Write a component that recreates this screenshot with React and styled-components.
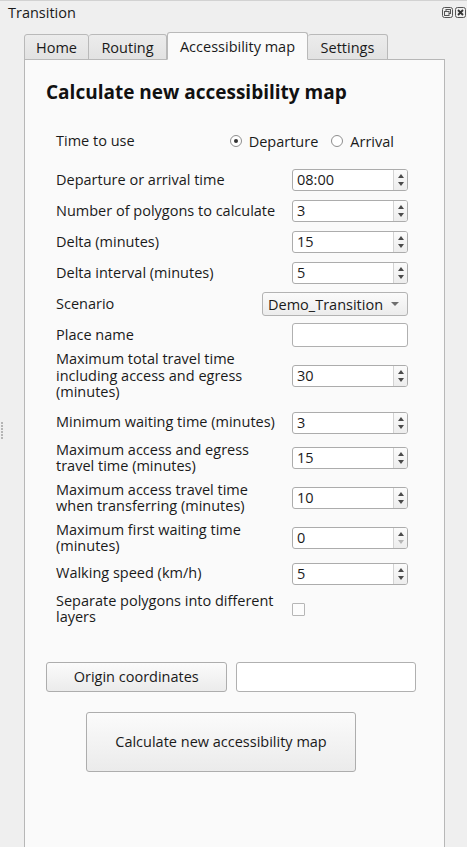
import React from "react";
import styled, { createGlobalStyle } from "styled-components";

const GlobalStyle = createGlobalStyle`
  html, body { margin: 0; padding: 0; background: #efefef; }
  body { font-family: "Open Sans", "DejaVu Sans", sans-serif; color: #1a1a1a; }
  * { box-sizing: border-box; }
`;

const Window = styled.div`
  width: 467px;
  height: 847px;
  overflow: hidden;
  background: #efefef;
  border-top: 1px solid #d2d2d2;
  display: flex;
  flex-direction: column;
  font-size: 14.5px;
`;

const TitleBar = styled.div`
  height: 23px;
  display: flex;
  align-items: center;
  justify-content: space-between;
  padding: 0 1px 0 8px;
`;

const Title = styled.span`
  font-size: 14.5px;
  line-height: 16px;
`;

const TitleIcons = styled.div`
  display: flex;
  gap: 2px;
  align-items: center;
`;

const Body = styled.div`
  flex: 1;
  display: flex;
  min-height: 0;
`;

const Handle = styled.div`
  width: 24px;
  display: flex;
  flex-direction: column;
  justify-content: center;
  align-items: flex-start;
  padding: 0 0 10px 1px;
  gap: 1px;
`;

const Dot = styled.span`
  width: 2px;
  height: 2px;
  background: #b5b5b5;
`;

const TabWidget = styled.div`
  width: 421px;
  display: flex;
  flex-direction: column;
  padding-top: 8px;
`;

const TabBar = styled.div`
  display: flex;
  align-items: flex-end;
  height: 28px;
  margin-bottom: -1px;
  position: relative;
  z-index: 1;
`;

const Tab = styled.div`
  width: ${(p) => p.$w}px;
  height: ${(p) => (p.$active ? 28 : 26)}px;
  display: flex;
  align-items: center;
  justify-content: center;
  font-size: 14.5px;
  border: 1px solid #b9b9b9;
  border-left-width: ${(p) => (p.$noLeft ? 0 : 1)}px;
  border-bottom: ${(p) => (p.$active ? "1px solid #fafafa" : "1px solid #b9b9b9")};
  border-radius: 3px 3px 0 0;
  background: ${(p) =>
    p.$active ? "#fafafa" : "linear-gradient(#ececec, #e2e2e2)"};
  padding-top: ${(p) => (p.$active ? 0 : 1)}px;
`;

const Panel = styled.div`
  flex: 1;
  background: #fafafa;
  border: 1px solid #b7b7b7;
  border-bottom: none;
  padding: 20px 28px 0 21px;
`;

const Heading = styled.h1`
  margin: 0;
  font-size: 19px;
  line-height: 24px;
  font-weight: 700;
  color: #111;
`;

const Form = styled.div`
  margin: 25px 8px 0 10px;
  display: grid;
  grid-template-columns: 1fr auto;
  row-gap: 7px;
  column-gap: 8px;
  align-items: center;
`;

const Label = styled.div`
  font-size: 14.5px;
  line-height: 16.5px;
  min-height: 24px;
  min-width: 0;
  white-space: nowrap;
  display: flex;
  align-items: center;
  margin-top: ${(p) => p.$mt || 0}px;
  margin-bottom: ${(p) => p.$mb || 0}px;
`;

const FieldCell = styled.div`
  justify-self: end;
  display: flex;
  align-items: center;
  margin-top: ${(p) => p.$mt || 0}px;
  margin-bottom: ${(p) => p.$mb || 0}px;
  margin-right: ${(p) => p.$mr || 0}px;
`;

const RadioGroup = styled.div`
  display: flex;
  align-items: center;
  gap: 13px;
`;

const RadioOption = styled.label`
  display: flex;
  align-items: center;
  gap: 7px;
  font-size: 14.5px;
`;

const RadioCircle = styled.span`
  width: 12px;
  height: 12px;
  border-radius: 50%;
  border: 1px solid #8e8e8e;
  background: #fff;
  display: flex;
  align-items: center;
  justify-content: center;
  &::after {
    content: "";
    width: 4px;
    height: 4px;
    border-radius: 50%;
    background: ${(p) => (p.$checked ? "#333" : "transparent")};
  }
`;

const SpinBox = styled.div`
  width: 116px;
  height: 22px;
  border: 1px solid #acacac;
  border-radius: 3px;
  background: #fff;
  display: flex;
  overflow: hidden;
`;

const SpinValue = styled.div`
  flex: 1;
  padding-left: 4px;
  font-size: 14.5px;
  line-height: 20px;
`;

const SpinButtons = styled.div`
  width: 14px;
  border-left: 1px solid #d3d3d3;
  background: linear-gradient(#fbfbfb, #ededed);
  display: flex;
  flex-direction: column;
  align-items: center;
  justify-content: center;
  gap: 4px;
`;

const Arrow = styled.span`
  width: 0;
  height: 0;
  border-left: 3.5px solid transparent;
  border-right: 3.5px solid transparent;
  ${(p) =>
    p.$up
      ? `border-bottom: 4px solid ${p.$dim ? "#b5b5b5" : "#4a4a4a"};`
      : `border-top: 4px solid ${p.$dim ? "#b5b5b5" : "#4a4a4a"};`}
`;

const Combo = styled.div`
  width: 146px;
  height: 24px;
  border: 1px solid #b3b3b3;
  border-radius: 3px;
  background: linear-gradient(#fbfbfb, #ececec);
  display: flex;
  align-items: center;
  justify-content: space-between;
  padding: 0 8px 0 5px;
  font-size: 14.5px;
`;

const ComboArrow = styled.span`
  width: 0;
  height: 0;
  border-left: 4px solid transparent;
  border-right: 4px solid transparent;
  border-top: 4px solid #6e6e6e;
`;

const LineEdit = styled.div`
  width: ${(p) => p.$w || 116}px;
  height: ${(p) => p.$h || 24}px;
  border: 1px solid #b0b0b0;
  border-radius: 3px;
  background: #fff;
  ${(p) => (p.$flex ? "flex: 1;" : "")}
`;

const CheckBox = styled.span`
  width: 13px;
  height: 13px;
  border: 1px solid #b6b6b6;
  border-radius: 1px;
  background: #fcfcfc;
  margin-right: 103px;
`;

const ButtonRow = styled.div`
  margin-top: 36px;
  display: flex;
  gap: 9px;
`;

const Button = styled.button`
  font-family: inherit;
  font-size: 14.5px;
  color: #1a1a1a;
  border: 1px solid #adadad;
  border-radius: 3px;
  background: linear-gradient(#fbfbfb, #ebebeb);
  height: ${(p) => p.$h || 30}px;
  width: ${(p) => (p.$w ? `${p.$w}px` : "auto")};
  ${(p) => (p.$flex ? "flex: 1;" : "")}
  margin-left: ${(p) => p.$ml || 0}px;
  margin-top: ${(p) => p.$mt || 0}px;
  padding: 0;
  display: block;
`;

const Spin = ({ value, dimDown }) => (
  <SpinBox>
    <SpinValue>{value}</SpinValue>
    <SpinButtons>
      <Arrow $up />
      <Arrow $dim={dimDown} />
    </SpinButtons>
  </SpinBox>
);

const FloatIcon = () => (
  <svg width="11" height="11" viewBox="0 0 11 11">
    <rect x="0.5" y="0.5" width="10" height="10" rx="2" fill="none" stroke="#555" />
    <rect x="4" y="2.5" width="4.5" height="4" fill="none" stroke="#555" />
    <rect x="2.5" y="4.5" width="4.5" height="4" fill="#efefef" stroke="#555" />
  </svg>
);

const CloseIcon = () => (
  <svg width="11" height="11" viewBox="0 0 11 11">
    <rect x="0.5" y="0.5" width="10" height="10" rx="2" fill="none" stroke="#555" />
    <path d="M3 3 L8 8 M8 3 L3 8" stroke="#333" strokeWidth="1.8" />
  </svg>
);

const rows = [
  { label: "Departure or arrival time", value: "08:00" },
  { label: "Number of polygons to calculate", value: "3" },
  { label: "Delta (minutes)", value: "15" },
  { label: "Delta interval (minutes)", value: "5" },
];

const rows2 = [
  { label: "Maximum total travel time\nincluding access and egress\n(minutes)", value: "30", mt: -3 },
  { label: "Minimum waiting time (minutes)", value: "3", mt: 3 },
  { label: "Maximum access and egress\ntravel time (minutes)", value: "15" },
  { label: "Maximum access travel time\nwhen transferring (minutes)", value: "10" },
  { label: "Maximum first waiting time\n(minutes)", value: "0", dimDown: true },
  { label: "Walking speed (km/h)", value: "5" },
  { label: "Separate polygons into different\nlayers", check: true },
];

const Lines = ({ text }) =>
  text.split("\n").map((t, i, a) => (
    <React.Fragment key={i}>
      {t}
      {i < a.length - 1 && <br />}
    </React.Fragment>
  ));

const LabelText = styled.span``;

export default function App() {
  return (
    <>
      <GlobalStyle />
      <Window>
        <TitleBar>
          <Title>Transition</Title>
          <TitleIcons>
            <FloatIcon />
            <CloseIcon />
          </TitleIcons>
        </TitleBar>
        <Body>
          <Handle>
            {[0, 1, 2, 3, 4, 5].map((i) => (
              <Dot key={i} />
            ))}
          </Handle>
          <TabWidget>
            <TabBar>
              <Tab $w={65}>Home</Tab>
              <Tab $w={78} $noLeft>Routing</Tab>
              <Tab $w={141} $active>Accessibility map</Tab>
              <Tab $w={80} $noLeft>Settings</Tab>
            </TabBar>
            <Panel>
              <Heading>Calculate new accessibility map</Heading>
              <Form>
                <Label $mb={8}>Time to use</Label>
                <FieldCell $mb={8} $mr={14}>
                  <RadioGroup>
                    <RadioOption>
                      <RadioCircle $checked />
                      Departure
                    </RadioOption>
                    <RadioOption>
                      <RadioCircle />
                      Arrival
                    </RadioOption>
                  </RadioGroup>
                </FieldCell>
                {rows.map((r) => (
                  <React.Fragment key={r.label}>
                    <Label>{r.label}</Label>
                    <FieldCell>
                      <Spin value={r.value} />
                    </FieldCell>
                  </React.Fragment>
                ))}
                <Label>Scenario</Label>
                <FieldCell>
                  <Combo>
                    Demo_Transition
                    <ComboArrow />
                  </Combo>
                </FieldCell>
                <Label>Place name</Label>
                <FieldCell>
                  <LineEdit />
                </FieldCell>
                {rows2.map((r) => (
                  <React.Fragment key={r.label}>
                    <Label $mt={r.mt}>
                      <LabelText>
                        <Lines text={r.label} />
                      </LabelText>
                    </Label>
                    <FieldCell $mt={r.mt}>
                      {r.check ? (
                        <CheckBox />
                      ) : (
                        <Spin value={r.value} dimDown={r.dimDown} />
                      )}
                    </FieldCell>
                  </React.Fragment>
                ))}
              </Form>
              <ButtonRow>
                <Button $flex>Origin coordinates</Button>
                <LineEdit $flex $h={30} />
              </ButtonRow>
              <Button $w={270} $h={60} $ml={40} $mt={20}>
                Calculate new accessibility map
              </Button>
            </Panel>
          </TabWidget>
        </Body>
      </Window>
    </>
  );
}
